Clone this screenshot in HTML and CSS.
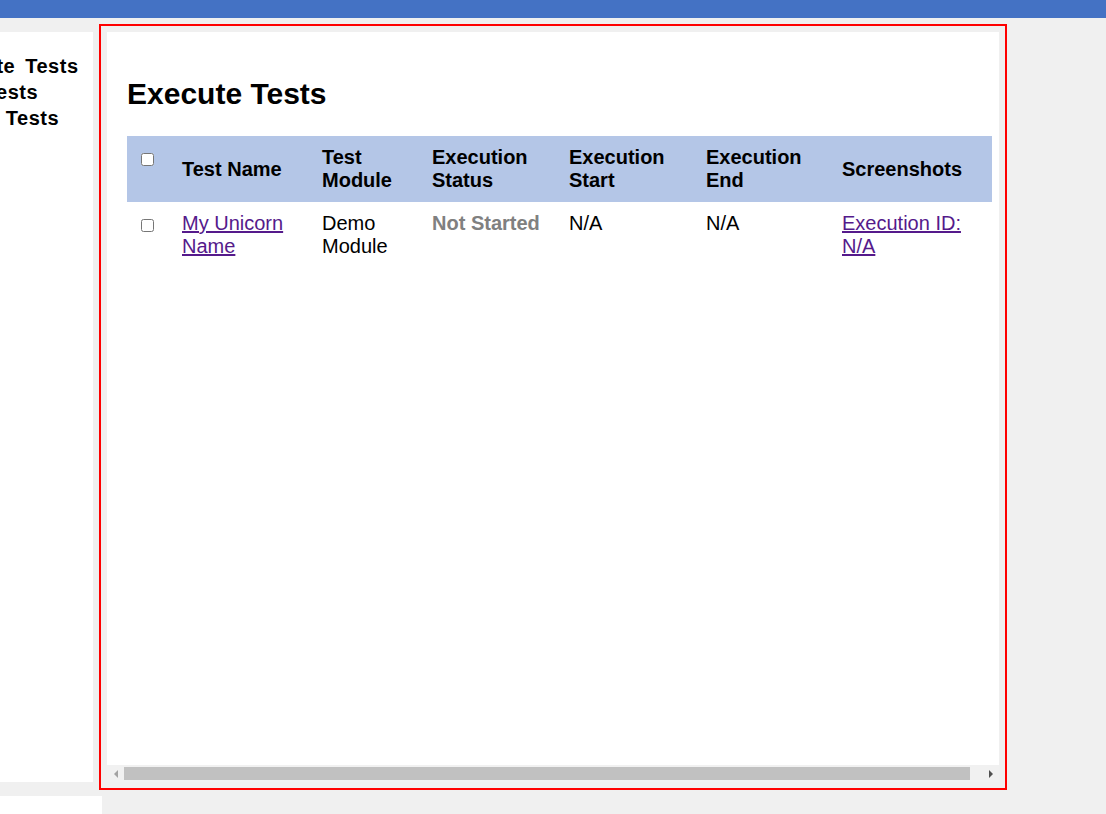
FILE: index.html
```html
<!DOCTYPE html>
<html>
<head>
<meta charset="utf-8">
<title>Execute Tests</title>
<link rel="stylesheet" href="styles.css">
</head>
<body>
<div class="topbar"></div>
<div class="layout">
  <nav class="sidebar">
    <ul class="nav">
      <li>Execute Tests</li>
      <li>Edit Tests</li>
      <li>Failed Tests</li>
    </ul>
  </nav>
  <main class="panel">
    <div class="content">
      <h2 class="title">Execute Tests</h2>
      <table class="tests">
        <colgroup>
          <col class="c-check"><col class="c-name"><col class="c-module"><col class="c-status"><col class="c-start"><col class="c-end"><col class="c-shots">
        </colgroup>
        <thead>
          <tr>
            <th class="check-cell"><input type="checkbox"></th>
            <th>Test Name</th>
            <th>Test Module</th>
            <th>Execution Status</th>
            <th>Execution Start</th>
            <th>Execution End</th>
            <th>Screenshots</th>
          </tr>
        </thead>
        <tbody>
          <tr>
            <td class="check-cell"><input type="checkbox"></td>
            <td><a href="#" class="link">My Unicorn Name</a></td>
            <td>Demo Module</td>
            <td class="status">Not Started</td>
            <td>N/A</td>
            <td>N/A</td>
            <td><a href="#" class="link">Execution ID: N/A</a></td>
          </tr>
        </tbody>
      </table>
    </div>
    <div class="hscroll">
      <div class="arrow-btn"><span class="arrow-left"></span></div>
      <div class="track"><div class="thumb"></div></div>
      <div class="arrow-btn"><span class="arrow-right"></span></div>
    </div>
  </main>
</div>
<footer class="footer"></footer>
</body>
</html>
```

FILE: styles.css
```css
html, body {
  margin: 0;
  padding: 0;
}
body {
  background: #f0f0f0;
  font-family: "Liberation Sans", Arial, sans-serif;
  font-size: 20px;
  color: #000;
}
.topbar {
  height: 18px;
  background: #4472c4;
}
.layout {
  display: flex;
  gap: 14px;
  padding: 14px 0;
  height: 750px;
}
.sidebar {
  width: 93px;
  flex: 0 0 93px;
  background: #fff;
  overflow: hidden;
  padding-top: 21px;
  box-sizing: border-box;
}
.nav {
  list-style: none;
  margin: 0 0 0 -65px;
  padding: 0;
  font-weight: bold;
  line-height: 26px;
  letter-spacing: 0.5px;
  word-spacing: 4px;
  white-space: nowrap;
}
.panel {
  width: 892px;
  flex: 0 0 892px;
  display: flex;
  flex-direction: column;
  outline: 2px solid #ff0000;
  outline-offset: 6px;
}
.content {
  flex: 1;
  background: #fff;
  overflow: hidden;
  padding: 20px 20px 0;
}
.title {
  font-size: 30px;
  font-weight: bold;
  margin: 25px 0;
}
.tests {
  border-collapse: collapse;
  table-layout: fixed;
  width: 865px;
}
.c-check { width: 45px; }
.c-name { width: 140px; }
.c-module { width: 110px; }
.c-status { width: 137px; }
.c-start { width: 137px; }
.c-end { width: 136px; }
.c-shots { width: 160px; }
.tests th {
  background: #b4c6e7;
  text-align: left;
  padding: 10px;
  vertical-align: middle;
  font-weight: bold;
}
.tests th.check-cell {
  vertical-align: top;
}
.tests td {
  padding: 10px;
  vertical-align: top;
}
.tests input {
  margin: 3px 3px 3px 4px;
  vertical-align: -2px;
}
.link {
  color: #551a8b;
  text-decoration: underline;
}
.status {
  color: #808080;
  font-weight: bold;
}
.hscroll {
  height: 17px;
  flex: 0 0 17px;
  background: #f1f1f1;
  display: flex;
}
.arrow-btn {
  width: 17px;
  flex: 0 0 17px;
  display: flex;
  align-items: center;
  justify-content: center;
}
.track {
  flex: 1;
  padding: 2px 0;
}
.thumb {
  width: 846px;
  height: 13px;
  background: #c1c1c1;
}
.arrow-left {
  width: 0;
  height: 0;
  border-top: 4px solid transparent;
  border-bottom: 4px solid transparent;
  border-right: 4px solid #a3a3a3;
}
.arrow-right {
  width: 0;
  height: 0;
  border-top: 4px solid transparent;
  border-bottom: 4px solid transparent;
  border-left: 4px solid #505050;
}
.footer {
  width: 102px;
  height: 30px;
  background: #fff;
}
```
